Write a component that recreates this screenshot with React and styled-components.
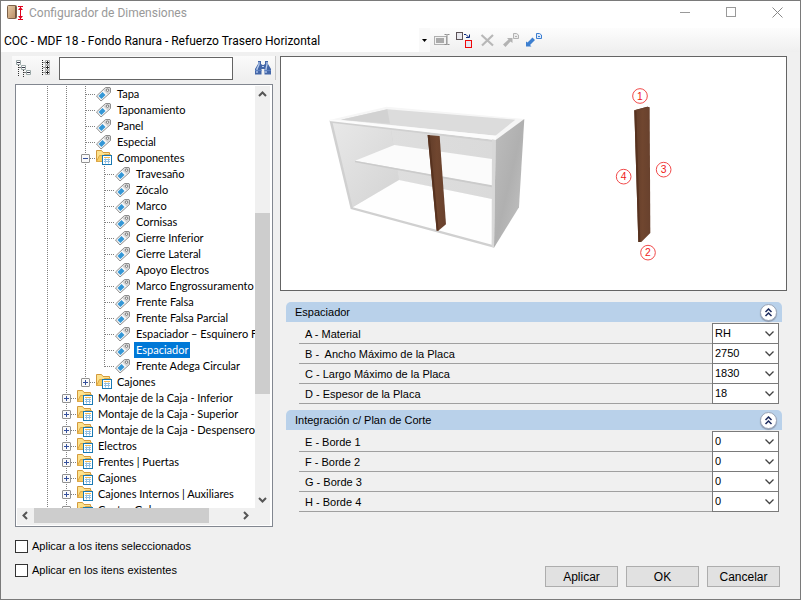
import React, { useState } from 'react'
import styled, { createGlobalStyle } from 'styled-components'

const GlobalStyle = createGlobalStyle`
  *,
  *::before,
  *::after {
    box-sizing: border-box;
  }

  body {
    margin: 0;
    background-color: #f0f0f0;
    color: #000;
    font-family: 'Liberation Sans', Arial, sans-serif;
    font-size: 11px;
    line-height: 16px;
  }

  button,
  input,
  select {
    font: inherit;
    color: inherit;
    border-radius: 0;
  }
`

const Window = styled.div`
  display: flex;
  flex-direction: column;
  height: 100vh;
  border: 1px solid #7a7a7a;
  background-color: #f0f0f0;
`

const TitleBar = styled.header`
  display: flex;
  align-items: center;
  flex: 0 0 27px;
  padding: 0 8px 4px 6px;
  background-color: #fff;
`

const Title = styled.h1`
  flex: 1;
  margin: 0 0 0 4px;
  font-family: Roboto, 'Open Sans', sans-serif;
  font-size: 12px;
  font-weight: 400;
  color: #999;
`

const WindowButton = styled.button`
  display: flex;
  align-items: center;
  justify-content: center;
  width: 29px;
  height: 22px;
  margin-left: 17px;
  padding: 0;
  border: none;
  background: none;
`

const Toolbar = styled.div`
  display: flex;
  align-items: center;
  flex: 0 0 24px;
  padding-right: 1px;
  background-image: linear-gradient(#fdfdfd, #efefef);
`

const PresetBox = styled.div`
  position: relative;
  width: 429px;
  height: 24px;
`

const PresetSelect = styled.select`
  appearance: none;
  width: 100%;
  height: 100%;
  padding: 1px 12px 0 3px;
  border: none;
  background-color: #fff;
  font-family: Roboto, 'Open Sans', sans-serif;
  font-size: 12px;
`

const PresetArrow = styled.span`
  position: absolute;
  top: 0;
  right: 0;
  display: flex;
  align-items: center;
  justify-content: center;
  width: 11px;
  height: 100%;
  background-color: #f9f9f9;
  pointer-events: none;
`

const ToolButton = styled.button`
  display: flex;
  align-items: center;
  justify-content: center;
  width: 23px;
  height: 22px;
  padding: 0;
  border: none;
  background: none;
`

const Body = styled.main`
  display: flex;
  flex: 1;
  min-height: 0;
  padding: 4px 13px 0 11px;
`

const Sidebar = styled.section`
  display: flex;
  flex-direction: column;
  flex: 0 0 268px;
`

const SearchBar = styled.div`
  display: flex;
  align-items: center;
  flex: 0 0 24px;
  width: 264px;
  margin-bottom: 4px;
  border-right: 1px solid #c8c8c8;
  background-image: linear-gradient(#fbfbfb, #efefef);
`

const SearchInput = styled.input`
  flex: 1;
  min-width: 0;
  height: 23px;
  margin: 0 18px 0 1px;
  padding: 0 4px;
  border: 1px solid #646464;
  background-color: #fff;
`

const SearchButton = styled(ToolButton)`
  width: 24px;
`

const TreeBox = styled.div`
  display: flex;
  flex-direction: column;
  flex: 1;
  width: 258px;
  min-height: 0;
  margin-left: 3px;
  padding: 1px 2px 1px 1px;
  border: 1px solid #828790;
  background-color: #fff;
`

const TreeTop = styled.div`
  display: flex;
  flex: 1;
  min-height: 0;
`

const Tree = styled.ul`
  flex: 1;
  min-width: 0;
  margin: 0;
  padding: 0 0 0 21px;
  overflow: hidden;
  list-style: none;
  font-family: Lato, 'Liberation Sans', sans-serif;
`

const TreeRow = styled.li`
  display: flex;
  height: 16px;
  white-space: nowrap;
`

const dots = (dir) =>
  `repeating-linear-gradient(${dir}, #808080 0 1px, transparent 1px 2px)`

const heights = { full: '16px', half: '9px' }

const Guide = styled.span`
  display: flex;
  align-items: center;
  justify-content: center;
  flex: 0 0 19px;
  background-image: ${dots('to bottom')}, ${dots('to right')};
  background-repeat: no-repeat;
  background-position: 9px 0, 10px 8px;
  background-size:
    1px ${(props) => heights[props.$line]},
    ${(props) => (props.$branch ? '9px' : '0')} 1px;
`

const Expander = styled.button`
  display: flex;
  width: 9px;
  height: 9px;
  padding: 0;
  border: 1px solid #919191;
  border-radius: 1px;
  background-color: #fafafa;
`

const NodeIcon = styled.span`
  flex: 0 0 20px;
  height: 16px;
`

const NodeLabel = styled.span`
  padding: 0 2px;
  color: ${(props) => (props.$selected ? '#fff' : '#000')};
  background-color: ${(props) => (props.$selected ? '#0078d7' : 'transparent')};
`

const VerticalScroll = styled.div`
  display: flex;
  flex-direction: column;
  flex: 0 0 15px;
  background-color: #f0f0f0;
`

const HorizontalScroll = styled.div`
  display: flex;
  flex: 0 0 17px;
  padding: 0 16px 2px 0;
  background-color: #f0f0f0;
`

const ScrollButton = styled.button`
  display: flex;
  align-items: center;
  justify-content: center;
  flex: 0 0 17px;
  padding: 0;
  border: none;
  background: none;
`

const ScrollTrack = styled.div`
  display: flex;
  flex-direction: ${(props) => (props.$vertical ? 'column' : 'row')};
  flex: 1;
`

const ScrollSpace = styled.div`
  flex: ${(props) => props.$size};
`

const ScrollThumb = styled.div`
  flex: ${(props) => props.$size};
  background-color: #cdcdcd;
`

const Content = styled.section`
  flex: 1;
  min-width: 0;
`

const Preview = styled.div`
  margin-bottom: 11px;
  border: 1px solid #646464;
  background-color: #fff;

  svg {
    display: block;
    width: 100%;
  }
`

const Group = styled.section`
  margin: 0 5px 7px 6px;
`

const GroupHeader = styled.div`
  display: flex;
  align-items: center;
  justify-content: space-between;
  height: 20px;
  margin-bottom: 1px;
  padding: 0 5px 0 9px;
  border-radius: 5px 5px 0 0;
  background-color: #b9d1ea;
`

const GroupTitle = styled.h2`
  margin: 0;
  font-size: 11px;
  font-weight: 400;
`

const CollapseButton = styled.button`
  display: flex;
  align-items: center;
  justify-content: center;
  width: 17px;
  height: 17px;
  padding: 0;
  border: 1px solid #9aa5b8;
  border-radius: 50%;
  background-color: #fff;
  box-shadow: 0 1px 1px #8a98ad;
`

const Field = styled.div`
  display: flex;
  height: 20px;
  margin: 0 3px 0 13px;
`

const FieldLabel = styled.label`
  flex: 1;
  height: 21px;
  padding: 3px 0 0 6px;
  border-bottom: 1px solid #a0a0a0;
  white-space: pre;
`

const FieldBox = styled.span`
  position: relative;
  width: 67px;
  height: 21px;
`

const FieldSelect = styled.select`
  display: block;
  appearance: none;
  width: 100%;
  height: 100%;
  padding: 0 16px 1px 2px;
  border: 1px solid #7a7a7a;
  background-color: #fff;
`

const FieldArrow = styled.svg`
  position: absolute;
  top: 8px;
  right: 5px;
  pointer-events: none;
`

const Footer = styled.footer`
  display: flex;
  justify-content: space-between;
  align-items: flex-end;
  padding: 11px 20px 12px 14px;
`

const Options = styled.div`
  display: flex;
  flex-direction: column;
  gap: 8px;
  padding-bottom: 9px;
`

const Option = styled.label`
  display: flex;
  align-items: center;
  gap: 4px;
`

const Checkbox = styled.input`
  appearance: none;
  width: 13px;
  height: 13px;
  margin: 0;
  border: 1px solid #333;
  background-color: #fff;

  &:checked {
    background-color: #0078d7;
  }
`

const Actions = styled.div`
  display: flex;
  gap: 8px;
`

const ActionButton = styled.button`
  width: 73px;
  height: 21px;
  padding: 0;
  border: 1px solid #adadad;
  background-color: #e1e1e1;
  font-size: 12px;
`

const AppIcon = () => (
  <svg width="18" height="17" viewBox="0 0 18 17">
    <defs>
      <linearGradient id="wood" x1="0" y1="0" x2="1" y2="1">
        <stop offset="0" stopColor="#e5caa6" />
        <stop offset="1" stopColor="#b88c62" />
      </linearGradient>
    </defs>
    <rect x="0.5" y="1.5" width="9" height="13" rx="1" fill="url(#wood)" stroke="#7c6149" />
    <path d="M8.5 2v12" stroke="#6f553e" />
    <path d="M11 2.5h5M11 15.5h5M13.5 3v12" stroke="#e0001b" />
    <path d="M13.5 3l2.500 3h-5zM13.5 15l2.500-3h-5z" fill="#e0001b" />
  </svg>
)

const RenameIcon = () => (
  <svg width="16" height="14" viewBox="0 0 16 14">
    <rect x="0.5" y="3.5" width="12" height="8" fill="#f2f2f2" stroke="#b0b0b0" />
    <rect x="2" y="5" width="8" height="5" fill="#aaa" />
    <path d="M10.5 1.5h2l.5.5.5-.5h2M13 2v9M10.5 11.5h2l.5-.5.5.5h2" fill="none" stroke="#8f8f8f" />
  </svg>
)

const ReplaceIcon = () => (
  <svg width="17" height="17" viewBox="0 0 17 17" fill="none">
    <rect x="0.5" y="0.5" width="6" height="7" fill="#e8e8ee" stroke="#5b5156" />
    <path d="M8 2.5h2l2.500 2.500M13.500 2.500v3H10" stroke="#0b2a80" />
    <rect x="9.5" y="8.5" width="6" height="7" fill="#e6e6f2" stroke="#f00808" />
  </svg>
)

const DeleteIcon = () => (
  <svg width="15" height="14" viewBox="0 0 15 14">
    <path d="M1.500 2L13 12.500M13 2L2 12.500" stroke="#b8b8b8" strokeWidth="2.200" />
  </svg>
)

const LinkIcon = ({ color, page }) => (
  <svg width="16" height="16" viewBox="0 0 16 16">
    <path
      d={page ? 'M0 9.500v5h5.500L4 13l5-5-2.500-2.500-5 5z' : 'M9.500 6H4l1.500 1.500-5.500 5L2.500 15l5-5.500L9.500 11z'}
      fill={color}
    />
    <path d="M10.500 1.500h3l2 1.500v3.500h-5z" fill={page ? '#dfeafa' : '#ececec'} stroke={color} />
    <path d="M12 4.500h2" stroke={color} />
  </svg>
)

const CollapseAllIcon = () => (
  <svg width="16" height="17" viewBox="0 0 16 17" fill="none">
    <path d="M2.500 5v12M7.500 10v7" stroke="#333" strokeDasharray="1 1" />
    <path d="M3 7.500h2M8 12.500h2" stroke="#777" />
    <path d="M.5.5h4v4h-4zM5.500 5.500h4v4h-4zM10.500 10.500h4v4h-4z" fill="#fff" stroke="#98a6a6" />
    <path d="M1 2.500h3M6 7.500h3M11 12.500h3" stroke="#334" />
  </svg>
)

const ExpandAllIcon = () => (
  <svg width="9" height="16" viewBox="0 0 9 16" fill="none">
    <path d="M.5 0v16" stroke="#222" strokeDasharray="1 1" />
    <path d="M1 2.500h2M1 7.500h2M1 12.500h2" stroke="#999" />
    <path d="M3.500.5h4v4h-4zM3.500 5.500h4v4h-4zM3.500 10.500h4v4h-4z" fill="#fff" stroke="#aaa" />
    <path d="M4 2.500h3M4 7.500h3M4 12.500h3M5.500 1v3M5.500 6v3M5.500 11v3" stroke="#222" />
  </svg>
)

const BinocularsIcon = () => (
  <svg width="16" height="14" viewBox="0 0 16 14">
    <path d="M3 0h3v3l1.500 1h1L10 3V0h3v3l3 5v5.500H9.500V8h-3v5.500H0V8l3-5z" fill="#4366a8" />
    <path d="M4 1v2.500L2 8v4M12 1v2.500L11 8v4" fill="none" stroke="#b8cdee" strokeWidth="1.300" />
    <path d="M0 9.500h6.500M9.500 9.500H16" stroke="#5b7fc0" />
    <path d="M7 5.500h2" stroke="#b9cdee" />
  </svg>
)

const TagIcon = () => (
  <svg width="17" height="16" viewBox="0 0 17 16">
    <path d="M10.500 1.500h4.500l.5.500v4.500L6 15l-4.500-5z" fill="#f7f7f7" stroke="#8e8e8e" />
    <path d="M10.500 2h4.500v4.500l-2.500 2-4-4z" fill="#d5d5d5" />
    <circle cx="12.500" cy="4.200" r="1.200" fill="#fff" stroke="#777" />
    <path d="M7.500 6l3 3-4 4-3-3z" fill="#3497d6" />
  </svg>
)

const FolderIcon = () => (
  <svg width="18" height="16" viewBox="0 0 18 16">
    <path d="M1.500 11.500v-11h5l1.500 2h6.500v9z" fill="#fde28d" stroke="#d39a3d" />
    <path d="M1.500 11.500l3-6h4l1-1h6v7z" fill="#f9cd62" stroke="#dda949" />
    <rect x="7.500" y="5.500" width="9" height="9" fill="#fff" stroke="#1a79b2" />
    <path d="M9 7.500h6" stroke="#f3b951" />
    <path d="M9 9.500h6M9 11.500h6M10.500 8.500v5M13.500 8.500v5" stroke="#91bfe2" />
  </svg>
)

const arrows = {
  up: 'M1 6l3.500-3.500L8 6',
  down: 'M1 3l3.500 3.500L8 3',
  left: 'M6 1L2.500 4.500 6 8',
  right: 'M3 1l3.500 3.500L3 8',
}

const Arrow = ({ dir }) => (
  <svg width="9" height="9" viewBox="0 0 9 9">
    <path d={arrows[dir]} fill="none" stroke="#555" strokeWidth="2" />
  </svg>
)

const Cabinet = () => (
  <svg viewBox="0 0 505 233" role="img" aria-label="Espaciador">
    <defs>
      <linearGradient id="side" x1="0" y1="0" x2="1" y2="1">
        <stop offset="0" stopColor="#bdbdbd" />
        <stop offset="0.5" stopColor="#b0b0b0" />
        <stop offset="1" stopColor="#c6c6c6" />
      </linearGradient>
      <linearGradient id="inner" x1="0" y1="0" x2="1" y2="1">
        <stop offset="0" stopColor="#e8e8e8" />
        <stop offset="1" stopColor="#d3d3d3" />
      </linearGradient>
      <linearGradient id="back" x1="0" y1="0" x2="1" y2="0">
        <stop offset="0" stopColor="#dedede" />
        <stop offset="1" stopColor="#dadada" />
      </linearGradient>
      <linearGradient id="plank" x1="0" y1="0" x2="1" y2="0">
        <stop offset="0" stopColor="#603c29" />
        <stop offset="0.5" stopColor="#70462f" />
        <stop offset="1" stopColor="#68412d" />
      </linearGradient>
    </defs>
    <g transform="translate(-1 -7) scale(0.3333)">
      <path d="M148 210L320 170L733 207L647 270z" fill="#f6f6f6" />
      <path d="M183 209L322 178L706 209L646 257z" fill="#dcdcdc" />
      <path d="M183 209L322 178L330 221z" fill="#d2d2d2" />
      <path d="M148 210L647 270L642 593L212 477z" fill="#d0d0d0" />
      <path d="M148 208L650 257L647 270L148 213z" fill="#fcfcfc" />
      <path d="M158 219L333 239L357 391L218 471z" fill="url(#inner)" />
      <path d="M333 239L636 275L636 447L357 391z" fill="url(#back)" />
      <path d="M225 332L343 285L636 327L636 407z" fill="#fbfbfb" />
      <path d="M225 332L636 406L636 412L225 337z" fill="#cbcbcb" />
      <path d="M218 472L357 390L636 447L636 584z" fill="#fefefe" />
      <path d="M647 270L733 207L717 472L642 593z" fill="url(#side)" />
      <path d="M636 268L647 270L642 593L635 590z" fill="#d8d8d8" />
      <path d="M443 255L479 258L498 523L474 543L470 541z" fill="url(#plank)" />
      <path d="M443 255L449 255L476 541L470 543z" fill="#57321f" />
    </g>
    <g transform="translate(259 -7) scale(0.3333)">
      <path d="M283 181L322 170L329 172L331 549L304 576L295 576z" fill="url(#plank)" />
      <path d="M283 181L289 183L301 576L295 576z" fill="#57321f" />
      <path d="M283 181L322 170L329 172L290 183z" fill="#68412e" />
      {[
        [300, 138, 1],
        [324, 608, 2],
        [371, 359, 3],
        [251, 380, 4],
      ].map(([x, y, n]) => (
        <g key={n}>
          <circle cx={x} cy={y} r="22" fill="#fff" stroke="#f04848" strokeWidth="3" />
          <text x={x} y={y + 11} fontSize="31" textAnchor="middle" fill="#f01818">
            {n}
          </text>
        </g>
      ))}
    </g>
  </svg>
)

const nodes = [
  ...['Tapa', 'Taponamiento', 'Panel', 'Especial'].map((label) => ({ label, depth: 3 })),
  { label: 'Componentes', depth: 3, folder: true, open: true },
  ...[
    'Travesaño',
    'Zócalo',
    'Marco',
    'Cornisas',
    'Cierre Inferior',
    'Cierre Lateral',
    'Apoyo Electros',
    'Marco Engrossuramento',
    'Frente Falsa',
    'Frente Falsa Parcial',
    'Espaciador – Esquinero F',
    'Espaciador',
  ].map((label) => ({ label, depth: 4 })),
  { label: 'Frente Adega Circular', depth: 4, last: true },
  { label: 'Cajones', depth: 3, folder: true, last: true },
  ...[
    'Montaje de la Caja - Inferior',
    'Montaje de la Caja - Superior',
    'Montaje de la Caja - Despensero',
    'Electros',
    'Frentes | Puertas',
    'Cajones',
    'Cajones Internos | Auxiliares',
    'Cantos Gola',
  ].map((label) => ({ label, depth: 2, folder: true })),
]

const groups = [
  {
    title: 'Espaciador',
    fields: [
      ['A - Material', 'RH'],
      ['B -  Ancho Máximo de la Placa', '2750'],
      ['C - Largo Máximo de la Placa', '1830'],
      ['D - Espesor de la Placa', '18'],
    ],
  },
  {
    title: 'Integración c/ Plan de Corte',
    fields: [
      ['E - Borde 1', '0'],
      ['F - Borde 2', '0'],
      ['G - Borde 3', '0'],
      ['H - Borde 4', '0'],
    ],
  },
]

const TreeNode = ({ node, selected, onSelect }) => (
  <TreeRow onClick={onSelect}>
    {Array.from({ length: node.depth - 1 }, (_, i) => (
      <Guide key={i} $line="full" />
    ))}
    <Guide $line={node.last ? 'half' : 'full'} $branch>
      {node.folder && (
        <Expander aria-label={node.open ? 'Contraer' : 'Expandir'}>
          <svg width="7" height="7" viewBox="0 0 7 7">
            <path d={node.open ? 'M1 3.500h5' : 'M1 3.500h5M3.500 1v5'} stroke="#35509c" />
          </svg>
        </Expander>
      )}
    </Guide>
    <NodeIcon>{node.folder ? <FolderIcon /> : <TagIcon />}</NodeIcon>
    <NodeLabel $selected={selected}>{node.label}</NodeLabel>
  </TreeRow>
)

const FieldGroup = ({ title, fields }) => {
  const [open, setOpen] = useState(true)

  return (
    <Group>
      <GroupHeader>
        <GroupTitle>{title}</GroupTitle>
        <CollapseButton aria-label={title} onClick={() => setOpen(!open)}>
          <svg width="9" height="9" viewBox="0 0 9 9">
            <path
              d="M1.500 4L4.500 1l3 3M1.500 8l3-3 3 3"
              fill="none"
              stroke="#1d2b5e"
              strokeWidth="1.500"
            />
          </svg>
        </CollapseButton>
      </GroupHeader>
      {open &&
        fields.map(([label, value]) => (
          <Field key={label}>
            <FieldLabel htmlFor={label[0]}>{label}</FieldLabel>
            <FieldBox>
              <FieldSelect id={label[0]} defaultValue={value}>
                <option>{value}</option>
              </FieldSelect>
              <FieldArrow width="9" height="6" viewBox="0 0 9 6">
                <path d="M.5.5l4 4 4-4" fill="none" stroke="#444" strokeWidth="1.300" />
              </FieldArrow>
            </FieldBox>
          </Field>
        ))}
    </Group>
  )
}

export default function App() {
  const [selected, setSelected] = useState('Espaciador')

  return (
    <>
      <GlobalStyle />
      <Window>
        <TitleBar>
          <AppIcon />
          <Title>Configurador de Dimensiones</Title>
          <WindowButton aria-label="Minimizar">
            <svg width="11" height="11" viewBox="0 0 11 11">
              <path d="M0 5.500h10" stroke="#999" />
            </svg>
          </WindowButton>
          <WindowButton aria-label="Maximizar">
            <svg width="11" height="11" viewBox="0 0 11 11">
              <rect x="0.5" y="0.5" width="9" height="9" fill="none" stroke="#999" />
            </svg>
          </WindowButton>
          <WindowButton aria-label="Cerrar">
            <svg width="11" height="11" viewBox="0 0 11 11">
              <path d="M.5.5l10 10M10.500.5l-10 10" stroke="#888" />
            </svg>
          </WindowButton>
        </TitleBar>

        <Toolbar>
          <PresetBox>
            <PresetSelect aria-label="Modelo">
              <option>COC - MDF 18 - Fondo Ranura - Refuerzo Trasero Horizontal</option>
            </PresetSelect>
            <PresetArrow>
              <svg width="5" height="3" viewBox="0 0 5 3">
                <path d="M0 0h5L2.500 3z" />
              </svg>
            </PresetArrow>
          </PresetBox>
          <ToolButton aria-label="Renombrar">
            <RenameIcon />
          </ToolButton>
          <ToolButton aria-label="Reemplazar">
            <ReplaceIcon />
          </ToolButton>
          <ToolButton aria-label="Eliminar">
            <DeleteIcon />
          </ToolButton>
          <ToolButton aria-label="Exportar">
            <LinkIcon color="#b3b3b3" />
          </ToolButton>
          <ToolButton aria-label="Importar">
            <LinkIcon color="#3d7fd0" page />
          </ToolButton>
        </Toolbar>

        <Body>
          <Sidebar>
            <SearchBar>
              <ToolButton aria-label="Contraer todo">
                <CollapseAllIcon />
              </ToolButton>
              <ToolButton aria-label="Expandir todo">
                <ExpandAllIcon />
              </ToolButton>
              <SearchInput aria-label="Buscar" />
              <SearchButton aria-label="Buscar">
                <BinocularsIcon />
              </SearchButton>
            </SearchBar>
            <TreeBox>
              <TreeTop>
                <Tree>
                  {nodes.map((node, i) => (
                    <TreeNode
                      key={i}
                      node={node}
                      selected={node.label === selected}
                      onSelect={() => setSelected(node.label)}
                    />
                  ))}
                </Tree>
                <VerticalScroll>
                  <ScrollButton aria-label="Subir">
                    <Arrow dir="up" />
                  </ScrollButton>
                  <ScrollTrack $vertical>
                    <ScrollSpace $size={110} />
                    <ScrollThumb $size={180} />
                    <ScrollSpace $size={97} />
                  </ScrollTrack>
                  <ScrollButton aria-label="Bajar">
                    <Arrow dir="down" />
                  </ScrollButton>
                </VerticalScroll>
              </TreeTop>
              <HorizontalScroll>
                <ScrollButton aria-label="Izquierda">
                  <Arrow dir="left" />
                </ScrollButton>
                <ScrollTrack>
                  <ScrollThumb $size={175} />
                  <ScrollSpace $size={28} />
                </ScrollTrack>
                <ScrollButton aria-label="Derecha">
                  <Arrow dir="right" />
                </ScrollButton>
              </HorizontalScroll>
            </TreeBox>
          </Sidebar>

          <Content>
            <Preview>
              <Cabinet />
            </Preview>
            {groups.map((group) => (
              <FieldGroup key={group.title} {...group} />
            ))}
          </Content>
        </Body>

        <Footer>
          <Options>
            <Option>
              <Checkbox type="checkbox" />
              Aplicar a los itens seleccionados
            </Option>
            <Option>
              <Checkbox type="checkbox" />
              Aplicar en los itens existentes
            </Option>
          </Options>
          <Actions>
            <ActionButton>Aplicar</ActionButton>
            <ActionButton>OK</ActionButton>
            <ActionButton>Cancelar</ActionButton>
          </Actions>
        </Footer>
      </Window>
    </>
  )
}
